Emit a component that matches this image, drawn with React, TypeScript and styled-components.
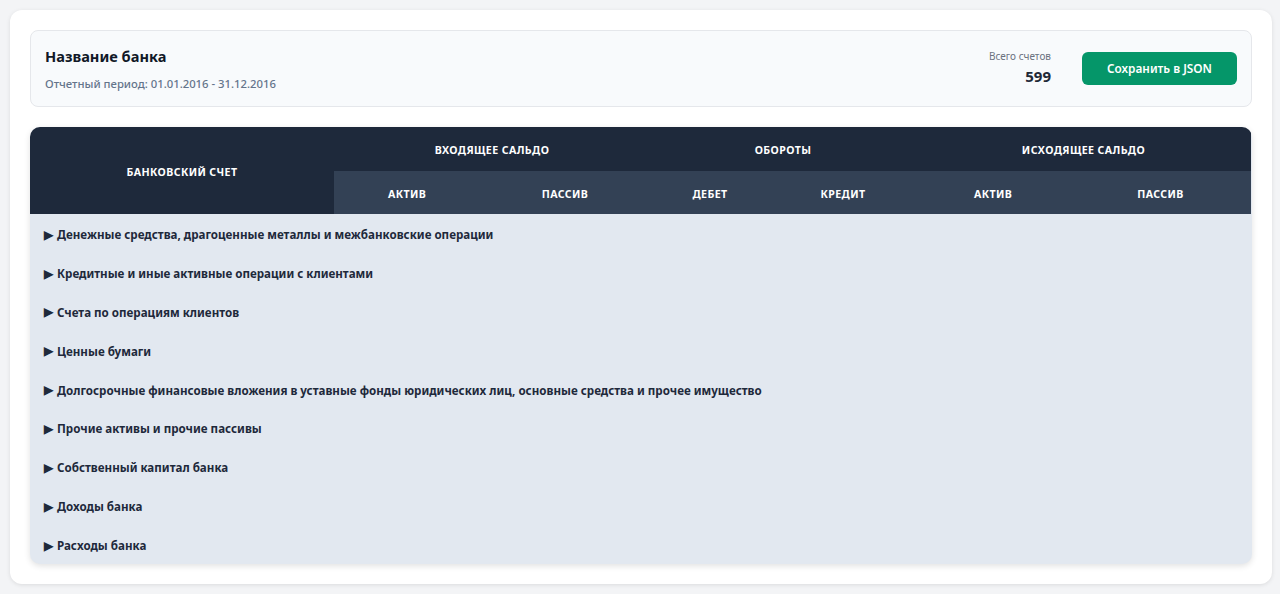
import React from "react";
import styled, { createGlobalStyle } from "styled-components";

const Global = createGlobalStyle`
  html, body { margin: 0; padding: 0; background: #f3f4f6; }
  body { font-family: "Noto Sans", "Open Sans", sans-serif; color: #1e293b; }
  * { box-sizing: border-box; }
`;

const Page = styled.div`
  padding: 10px 8px 10px 10px;
`;

const Card = styled.div`
  background: #ffffff;
  border-radius: 12px;
  box-shadow: 0 1px 4px rgba(0, 0, 0, 0.1);
  padding: 20px;
  display: flex;
  flex-direction: column;
  gap: 20px;
`;

const Header = styled.div`
  display: flex;
  justify-content: space-between;
  align-items: center;
  background: #f8fafc;
  border: 1px solid #e5e7eb;
  border-radius: 8px;
  padding: 13px 14px 14px 14px;
  height: 77px;
`;

const TitleBlock = styled.div`
  display: flex;
  flex-direction: column;
  gap: 9px;
`;

const Title = styled.h1`
  margin: 0;
  font-size: 14.6px;
  font-weight: 700;
  color: #111827;
  line-height: 22px;
`;

const Period = styled.div`
  font-size: 11.3px;
  color: #64748b;
  font-weight: 500;
  line-height: 16px;
`;

const Right = styled.div`
  display: flex;
  align-items: center;
  gap: 31px;
`;

const Stat = styled.div`
  display: flex;
  flex-direction: column;
  align-items: flex-end;
  gap: 2px;
`;

const StatLabel = styled.div`
  font-size: 10px;
  color: #6b7280;
  line-height: 14px;
`;

const StatValue = styled.div`
  font-size: 15px;
  font-weight: 700;
  color: #1f2937;
  line-height: 22px;
`;

const SaveButton = styled.button`
  background: #059669;
  color: #ffffff;
  border: none;
  border-radius: 6px;
  font-family: inherit;
  font-size: 11.8px;
  font-weight: 600;
  width: 155px;
  height: 33px;
  cursor: pointer;
`;

const Table = styled.div`
  border-radius: 10px;
  overflow: hidden;
  box-shadow: 0 2px 6px rgba(0, 0, 0, 0.12);
  background: #e2e8f0;
`;

const HeadGrid = styled.div`
  display: grid;
  grid-template-columns: 304px 146px 170px 120px 146px 154px 181px;
  grid-template-rows: 44px 43px;
`;

const HeadCell = styled.div<{ $sub?: boolean; $span?: number; $rows?: number }>`
  display: flex;
  align-items: center;
  justify-content: center;
  background: ${(p) => (p.$sub ? "#334155" : "#1e293b")};
  color: #ffffff;
  font-size: 10.6px;
  font-weight: 700;
  text-transform: uppercase;
  letter-spacing: 0.4px;
  padding-top: 2px;
  grid-column: span ${(p) => p.$span ?? 1};
  grid-row: span ${(p) => p.$rows ?? 1};
`;

const Body = styled.div`
  display: flex;
  flex-direction: column;
`;

const Row = styled.div`
  height: 38.9px;
  display: flex;
  align-items: center;
  gap: 4px;
  padding: 2px 0 0 14px;
  font-size: 11.6px;
  font-weight: 700;
  color: #1e293b;
`;

const Arrow = styled.span`
  font-size: 11.5px;
  line-height: 1;
  color: #1e293b;
`;

const sections = [
  "Денежные средства, драгоценные металлы и межбанковские операции",
  "Кредитные и иные активные операции с клиентами",
  "Счета по операциям клиентов",
  "Ценные бумаги",
  "Долгосрочные финансовые вложения в уставные фонды юридических лиц, основные средства и прочее имущество",
  "Прочие активы и прочие пассивы",
  "Собственный капитал банка",
  "Доходы банка",
  "Расходы банка",
];

export default function App() {
  return (
    <>
      <Global />
      <Page>
        <Card>
          <Header>
            <TitleBlock>
              <Title>Название банка</Title>
              <Period>Отчетный период: 01.01.2016 - 31.12.2016</Period>
            </TitleBlock>
            <Right>
              <Stat>
                <StatLabel>Всего счетов</StatLabel>
                <StatValue>599</StatValue>
              </Stat>
              <SaveButton>Сохранить в JSON</SaveButton>
            </Right>
          </Header>
          <Table>
            <HeadGrid>
              <HeadCell $rows={2}>Банковский счет</HeadCell>
              <HeadCell $span={2}>Входящее сальдо</HeadCell>
              <HeadCell $span={2}>Обороты</HeadCell>
              <HeadCell $span={2}>Исходящее сальдо</HeadCell>
              <HeadCell $sub>Актив</HeadCell>
              <HeadCell $sub>Пассив</HeadCell>
              <HeadCell $sub>Дебет</HeadCell>
              <HeadCell $sub>Кредит</HeadCell>
              <HeadCell $sub>Актив</HeadCell>
              <HeadCell $sub>Пассив</HeadCell>
            </HeadGrid>
            <Body>
              {sections.map((s) => (
                <Row key={s}>
                  <Arrow>▶</Arrow>
                  {s}
                </Row>
              ))}
            </Body>
          </Table>
        </Card>
      </Page>
    </>
  );
}
